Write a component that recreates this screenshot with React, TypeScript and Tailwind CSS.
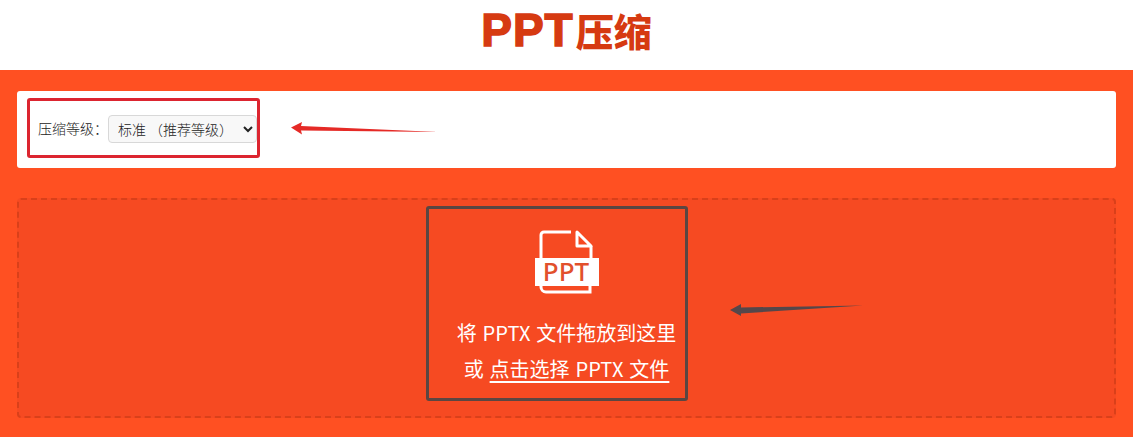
export default function App() {
  const cjk = "font-['Noto_Sans_CJK_SC','Noto_Sans',sans-serif]";
  return (
    <div className={`relative h-[441px] w-[1133px] overflow-hidden bg-white ${cjk}`}>
      <header className="flex h-[70px] items-center justify-center">
        <h1 className="mt-[-10px] flex items-center text-[#d63a11]">
          <span className="font-['Liberation_Sans',sans-serif] text-[46px] font-bold leading-none tracking-[1px] [-webkit-text-stroke:1.5px_#d63a11]">PPT</span>
          <span className="ml-[2px] text-[38px] font-black leading-none">压缩</span>
        </h1>
      </header>
      <main className="flex h-[367px] flex-col gap-[30px] bg-[#ff5022] px-[17px] pt-[21px]">
        <section className="flex h-[77px] items-center rounded-[3px] bg-white pb-[2px] pl-[21px]">
          <label className="w-[70px] text-[14px] font-light text-[#222]">压缩等级：</label>
          <select className="h-[28px] w-[149px] rounded-[4px] border border-[#d8d8d8] bg-[#f8f8f8] pl-[5px] text-[14px] font-light text-[#222]">
            <option>标准 （推荐等级）</option>
          </select>
        </section>
        <section className="flex h-[220px] flex-col items-center rounded-[4px] border-2 border-dashed border-[#d9401a] bg-[#f64a22] pt-[28px] text-white">
          <svg width="66" height="66" viewBox="0 0 66 66" className="ml-[-1px]">
            <path d="M8 34V7a3 3 0 0 1 3-3h27" fill="none" stroke="#fff" strokeWidth="3" />
            <path d="M44 4l14 14H44z" fill="none" stroke="#fff" strokeWidth="3" strokeLinejoin="round" />
            <path d="M58 18v14" fill="none" stroke="#fff" strokeWidth="3" />
            <path d="M8 56v3a5 5 0 0 0 5 5h44v-9" fill="none" stroke="#fff" strokeWidth="3" />
            <rect x="2" y="30" width="64" height="28" fill="#fff" />
            <text x="33" y="53" textAnchor="middle" fontFamily="Noto Sans, sans-serif" fontWeight="500" fontSize="26" fill="#e2502c">PPT</text>
          </svg>
          <p className="mt-[21px] text-[20px] leading-[36px] [word-spacing:1.5px]">将 PPTX 文件拖放到这里</p>
          <p className="text-[20px] leading-[36px] [word-spacing:1.5px]">或 <span className="underline decoration-2 underline-offset-[4px]">点击选择 PPTX 文件</span></p>
        </section>
      </main>

      <div className="absolute left-[27px] top-[98px] h-[60px] w-[233px] rounded-[3px] border-[3px] border-[#dc2530]" />
      <div className="absolute left-[426px] top-[206px] h-[195px] w-[262px] rounded-[3px] border-[3px] border-[#5b4642]" />
      <svg className="absolute left-[290px] top-[120px]" width="150" height="16" viewBox="0 0 150 16">
        <path d="M1 7.5L12 2l-1 4 137 6L11 10.5l1 4z" fill="#e52a26" />
      </svg>
      <svg className="absolute left-[729px] top-[300px]" width="136" height="18" viewBox="0 0 136 18">
        <path d="M1 10L12 4v3.5L134 5.5 12 13.5V16z" fill="#55474a" />
      </svg>
    </div>
  );
}
